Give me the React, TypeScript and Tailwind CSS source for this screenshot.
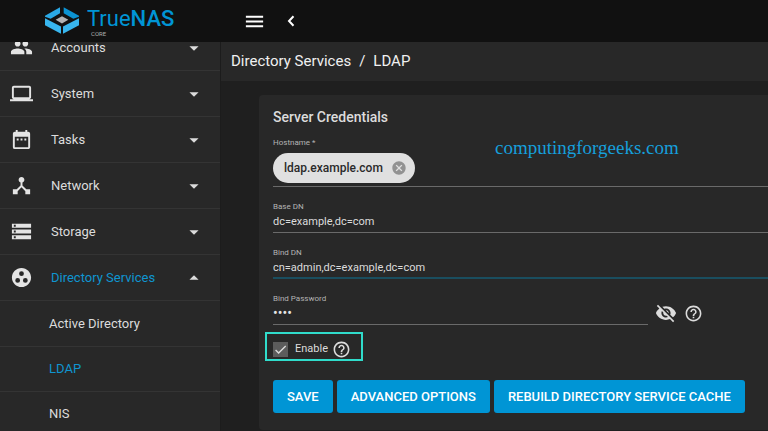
import React, { useState } from 'react';
import {
  MdArrowDropDown,
  MdArrowDropUp,
  MdCancel,
  MdCheck,
  MdDateRange,
  MdDeviceHub,
  MdGroupWork,
  MdHelpOutline,
  MdLaptop,
  MdMenu,
  MdPeople,
  MdStorage,
  MdVisibilityOff,
} from 'react-icons/md';

const menu = [
  { label: 'Accounts', icon: MdPeople },
  { label: 'System', icon: MdLaptop },
  { label: 'Tasks', icon: MdDateRange },
  { label: 'Network', icon: MdDeviceHub },
  { label: 'Storage', icon: MdStorage },
  { label: 'Directory Services', icon: MdGroupWork, open: true },
];

const directoryItems = ['Active Directory', 'LDAP', 'NIS'];

function Logo() {
  return (
    <a href="#home" className="flex items-start gap-2 text-[#0095d5]">
      <svg viewBox="0 0 102 80" className="mt-[7px] h-[27px] w-[34px]" aria-hidden="true">
        <path d="M0 26 45 0v18L17 35 0 29z" fill="#2aa9e6" />
        <path d="M56 0l46 26v3l-17 6-29-17z" fill="#0b93d3" />
        <path d="M0 33l48 25v22L0 54z" fill="#38b6ef" />
        <path d="M102 33L54 58v22l48-26z" fill="#38b6ef" />
        <path d="M51 27l19 11-19 11-19-11z" fill="#b2b3b4" />
      </svg>
      <span className="flex flex-col">
        <span className="mt-[7px] text-[22px] leading-[24px]">
          True<b className="font-medium">NAS</b>
        </span>
        <span className="ml-1 text-[6px] leading-[5px] text-[#b0b0b0]">CORE</span>
      </span>
    </a>
  );
}

function Sidebar() {
  return (
    <aside className="w-[221px] shrink-0 overflow-hidden border-r border-[#1c1c1c] bg-[#282828]">
      <nav className="-mt-[17px] text-[13px] text-[#dcdcdc]">
        {menu.map(({ label, icon: Icon, open }) => (
          <button
            key={label}
            className="flex h-[46px] w-full items-center border-b border-[#343434] pl-[10px] pr-[15px] text-left"
          >
            <Icon size={23} className="text-[#e4e4e4]" />
            <span className={open ? 'ml-[18px] flex-1 text-[#0f95d0]' : 'ml-[18px] flex-1'}>{label}</span>
            {open ? <MdArrowDropUp size={22} /> : <MdArrowDropDown size={22} />}
          </button>
        ))}
        <div className="pt-px">
          {directoryItems.map((item) => (
            <a
              key={item}
              href={'#' + item}
              className={
                item === 'LDAP'
                  ? 'flex h-[45px] items-center border-b border-[#343434] pl-[49px] text-[#0f95d0]'
                  : 'flex h-[45px] items-center border-b border-[#343434] pl-[49px]'
              }
            >
              {item}
            </a>
          ))}
        </div>
      </nav>
    </aside>
  );
}

type FieldProps = {
  id: string;
  label: string;
  value: string;
  type?: string;
  active?: boolean;
};

function Field({ id, label, value, type = 'text', active }: FieldProps) {
  const [text, setText] = useState(value);

  return (
    <div
      className={
        active
          ? 'flex h-[46px] flex-1 flex-col justify-end border-b-2 border-[#1a4e5f] pb-px'
          : 'flex h-[46px] flex-1 flex-col justify-end border-b border-[#6a6a6a] pb-[2px]'
      }
    >
      <label htmlFor={id} className="text-[8px] leading-[10px] text-[#b4b4b4]">
        {label}
      </label>
      <input
        id={id}
        type={type}
        value={text}
        onChange={(e) => setText(e.target.value)}
        className={
          type === 'password'
            ? 'h-[18px] w-full bg-transparent text-[14px] text-[#e4e4e4] outline-none'
            : 'h-[18px] w-full bg-transparent text-[11px] text-[#dcdcdc] outline-none'
        }
      />
    </div>
  );
}

export default function App() {
  const [enabled, setEnabled] = useState(true);

  return (
    <div className="flex h-screen flex-col overflow-hidden bg-[#1f1f1f] font-[Roboto,sans-serif] text-[#dcdcdc]">
      <header className="flex h-[42px] shrink-0 bg-[#111111]">
        <div className="w-[221px] shrink-0 pl-[45px]">
          <Logo />
        </div>
        <div className="flex items-center gap-4 pl-[22px] text-white">
          <button aria-label="Toggle menu">
            <MdMenu size={23} />
          </button>
          <button aria-label="Collapse menu" className="flex w-[18px] justify-center">
            <svg viewBox="0 0 8 12" className="h-3 w-2" fill="none" stroke="currentColor" strokeWidth="2">
              <path d="M6.500 1.200 2 6l4.500 4.800" />
            </svg>
          </button>
        </div>
      </header>

      <div className="flex min-h-0 flex-1">
        <Sidebar />

        <main className="flex min-w-0 flex-1 flex-col overflow-hidden">
          <div className="flex h-[39px] shrink-0 items-center gap-2 bg-[#282828] pl-[10px] text-[15px] text-[#f0f0f0]">
            <a href="#directory">Directory Services</a>
            <span>/</span>
            <a href="#ldap">LDAP</a>
          </div>

          <form
            onSubmit={(e) => e.preventDefault()}
            className="relative ml-[38px] mt-[14px] rounded-l-sm bg-[#282828] pb-[17px] pl-[14px]"
          >
            <h1 className="pt-[13px] text-[14px] leading-[18px] font-medium">Server Credentials</h1>
            <span className="absolute left-[236px] top-[41px] font-['Liberation_Serif',serif] text-[19px] leading-6 text-[#169fdb]">
              computingforgeeks.com
            </span>

            <div className="mt-3 border-b border-[#6a6a6a] pb-[3px]">
              <label htmlFor="hostname" className="block text-[8px] leading-[10px] text-[#b4b4b4]">
                Hostname *
              </label>
              <div className="mt-[5px] flex">
                <span className="flex h-[30px] items-center gap-2 rounded-full bg-[#e0e0e0] pl-[11px] pr-2 text-[12px] font-medium text-[#2a2a2a]">
                  ldap.example.com
                  <button type="button" aria-label="Remove ldap.example.com" className="text-[#929292]">
                    <MdCancel size={16} />
                  </button>
                </span>
                <input id="hostname" className="min-w-0 flex-1 bg-transparent outline-none" />
              </div>
            </div>

            <Field id="basedn" label="Base DN" value="dc=example,dc=com" />
            <Field id="binddn" label="Bind DN" value="cn=admin,dc=example,dc=com" active />
            <div className="flex items-end">
              <Field id="bindpw" label="Bind Password" value="pass" type="password" />
              <div className="flex w-[120px] shrink-0 items-center gap-[7px] pb-px pl-[7px]">
                <button type="button" aria-label="Show password">
                  <MdVisibilityOff size={22} />
                </button>
                <button type="button" aria-label="Bind password help">
                  <MdHelpOutline size={19} />
                </button>
              </div>
            </div>

            <div className="-ml-2 mt-[7px] flex h-[29px] w-[98px] items-center border-2 border-[#30dccb] pl-[6px] pt-[5px]">
              <span className="relative flex">
                <input
                  id="enable"
                  type="checkbox"
                  checked={enabled}
                  onChange={(e) => setEnabled(e.target.checked)}
                  className="h-[15px] w-[15px] appearance-none bg-[#5c5c5c]"
                />
                {enabled && <MdCheck size={15} className="pointer-events-none absolute left-0 top-0" />}
              </span>
              <label htmlFor="enable" className="ml-[7px] text-[11px]">
                Enable
              </label>
              <button type="button" aria-label="Enable help" className="ml-1">
                <MdHelpOutline size={19} />
              </button>
            </div>

            <div className="mt-[19px] flex gap-1 text-[13px] font-medium text-white">
              <button className="h-[33px] rounded-[3px] bg-[#0095d5] px-[14px] whitespace-nowrap">SAVE</button>
              <button type="button" className="h-[33px] rounded-[3px] bg-[#0095d5] px-[14px] whitespace-nowrap">
                ADVANCED OPTIONS
              </button>
              <button type="button" className="h-[33px] rounded-[3px] bg-[#0095d5] px-[14px] whitespace-nowrap">
                REBUILD DIRECTORY SERVICE CACHE
              </button>
            </div>
          </form>
        </main>
      </div>
    </div>
  );
}
